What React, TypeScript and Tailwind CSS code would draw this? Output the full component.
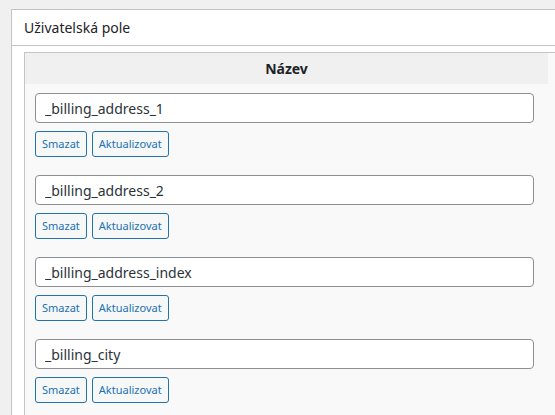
const fields = ['_billing_address_1', '_billing_address_2', '_billing_address_index', '_billing_city'];

function FieldRow({ name }: { name: string }) {
  return (
    <div className="px-[10px] py-[9px]">
      <input
        type="text"
        defaultValue={name}
        className="block h-[30px] w-[499px] rounded-[4px] border border-[#8c8f94] bg-white px-[9px] text-[14px] text-[#2c3338] outline-none"
      />
      <div className="mt-[8px] flex gap-[5px]">
        <button className="h-[26px] rounded-[3px] border border-[#2271b1] bg-[#f6f7f7] px-[6px] text-[11px] text-[#2271b1]">
          Smazat
        </button>
        <button className="h-[26px] rounded-[3px] border border-[#2271b1] bg-[#f6f7f7] px-[6px] text-[11px] text-[#2271b1]">
          Aktualizovat
        </button>
      </div>
    </div>
  );
}

export default function App() {
  return (
    <div
      className="h-[415px] w-[555px] overflow-hidden bg-[#f0f0f1] pl-[11px] pt-[9px]"
      style={{ fontFamily: '"Noto Sans", "Open Sans", sans-serif' }}
    >
      <div className="w-[600px] border border-[#c3c4c7] bg-white">
        <div className="flex h-[36px] items-center border-b border-[#c3c4c7] px-[12px] text-[14px] text-[#1d2327]">
          Uživatelská pole
        </div>
        <div className="mt-[6px] pl-[12px]">
          <div className="border border-[#c3c4c7] bg-[#f9f9f9] pb-[30px]">
            <div className="flex h-[31px] w-[523px] items-center justify-center bg-[#f0f0f1] text-[14px] font-bold text-[#1d2327]">
              Název
            </div>
            {fields.map((f) => (
              <FieldRow key={f} name={f} />
            ))}
          </div>
        </div>
      </div>
    </div>
  );
}
